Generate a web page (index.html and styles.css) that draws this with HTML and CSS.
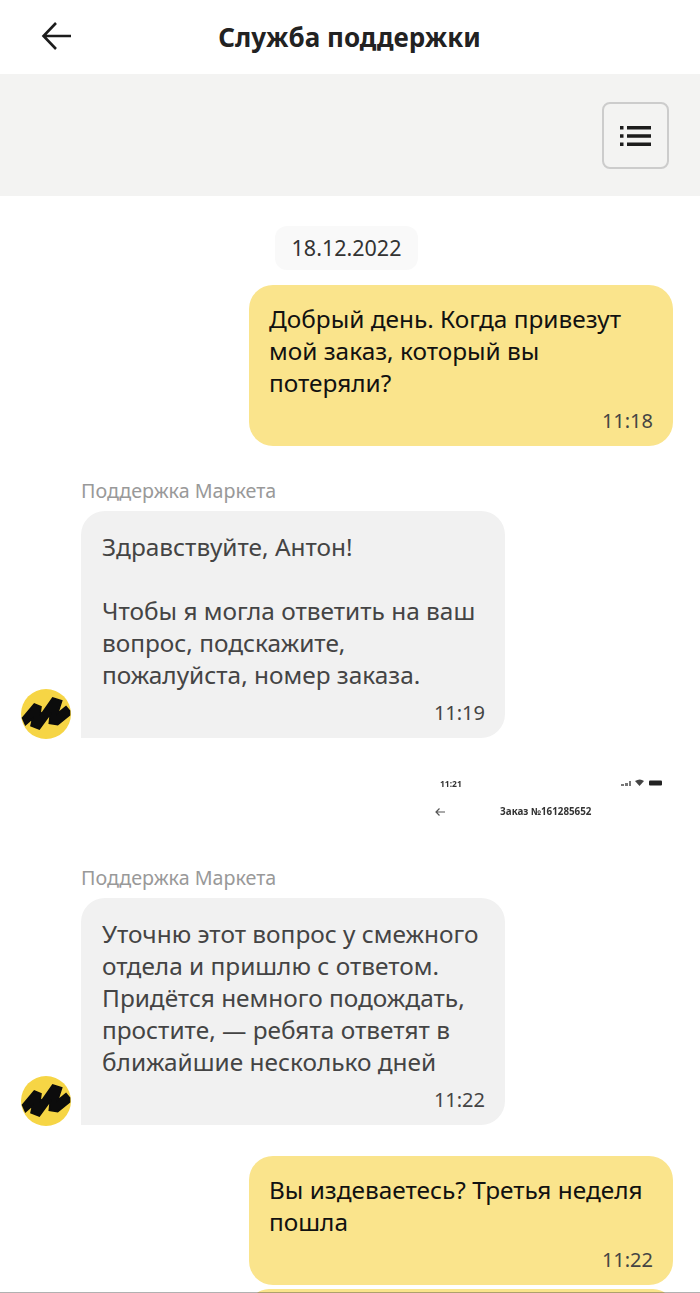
FILE: index.html
```html
<!DOCTYPE html>
<html lang="ru">
<head>
  <meta charset="UTF-8" />
  <meta name="viewport" content="width=device-width, initial-scale=1.0"/>
  <title>Служба поддержки</title>
  <link rel="stylesheet" href="styles.css">
</head>
<body>
  <header class="topbar">
    <svg class="back-icon" width="32" height="30" viewBox="0 0 32 30" aria-hidden="true">
      <path d="M30 15H3M15 2 2.500 15 15 28" fill="none" stroke="#1c1c1c" stroke-width="2.600"/>
    </svg>
    <h1>Служба поддержки</h1>
  </header>

  <div class="band">
    <button class="menu-btn" aria-label="Меню">
      <svg width="31" height="20" viewBox="0 0 31 20" aria-hidden="true">
        <path d="M0 0h3.500v3.500H0zM0 8.300h3.500v3.500H0zM0 16.500h3.500V20H0zM7 0h24v3.500H7zM7 8.300h24v3.500H7zM7 16.500h24V20H7z" fill="#1c1c1c"/>
      </svg>
    </button>
  </div>

  <main class="chat">
    <div class="date">18.12.2022</div>

    <div class="msg-out">
      <p>Добрый день. Когда привезут мой заказ, который вы потеряли?</p>
      <time>11:18</time>
    </div>

    <div class="sender">Поддержка Маркета</div>
    <div class="row-in">
      <svg class="avatar" width="50" height="50" viewBox="0 0 50 50" aria-hidden="true">
        <circle cx="25" cy="25" r="25" fill="#f6d545"/>
        <path d="M1.500 29 13.300 15 20 17.700 19 25 21.700 23.300 31.700 9 40.700 11.700 36.700 24.300 45 17.700 48.500 21.700 48.500 26 36.700 35.700 28.300 34.300 29.300 25 18.300 40 10 36.700 11.700 29.300 4.500 35.700z" fill="#0c0c0c" stroke="#0c0c0c" stroke-width="1.600"/>
      </svg>
      <div class="msg-in">
        <p>Здравствуйте, Антон!<br><br>Чтобы я могла ответить на ваш вопрос, подскажите, пожалуйста, номер заказа.</p>
        <time>11:19</time>
      </div>
    </div>

    <div class="thumb">
      <div class="thumb-status">
        <span>11:21</span>
        <svg width="44" height="8" viewBox="0 0 44 8" aria-hidden="true">
          <path d="M0 5h3v2H0zM4 4h3v3H4zM8 2h2v5H8z" fill="#777"/>
          <path d="M14 2q5-3 9 0l-4.500 5z" fill="#444"/>
          <rect x="28" y="1.500" width="13" height="5" rx="1" fill="#222"/>
        </svg>
      </div>
      <div class="thumb-title">
        <svg width="12" height="10" viewBox="0 0 12 10" aria-hidden="true">
          <path d="M11 5H2M5.500 1.500 2 5l3.500 3.500" fill="none" stroke="#555" stroke-width="1.200"/>
        </svg>
        <span>Заказ №161285652</span>
      </div>
    </div>

    <div class="sender">Поддержка Маркета</div>
    <div class="row-in">
      <svg class="avatar" width="50" height="50" viewBox="0 0 50 50" aria-hidden="true">
        <circle cx="25" cy="25" r="25" fill="#f6d545"/>
        <path d="M1.500 29 13.300 15 20 17.700 19 25 21.700 23.300 31.700 9 40.700 11.700 36.700 24.300 45 17.700 48.500 21.700 48.500 26 36.700 35.700 28.300 34.300 29.300 25 18.300 40 10 36.700 11.700 29.300 4.500 35.700z" fill="#0c0c0c" stroke="#0c0c0c" stroke-width="1.600"/>
      </svg>
      <div class="msg-in">
        <p>Уточню этот вопрос у смежного отдела и пришлю с ответом. Придётся немного подождать, простите, — ребята ответят в ближайшие несколько дней</p>
        <time>11:22</time>
      </div>
    </div>

    <div class="msg-out msg-out-second">
      <p>Вы издеваетесь? Третья неделя пошла</p>
      <time>11:22</time>
    </div>
    <div class="msg-out msg-out-next"></div>
  </main>

  <div class="bottom-line"></div>
</body>
</html>
```

FILE: styles.css
```css
* {
  margin: 0;
  padding: 0;
  box-sizing: border-box;
}

html,
body {
  height: 1293px;
  overflow: hidden;
}

body {
  position: relative;
  background: #fff;
  font-family: "Noto Sans", "Open Sans", sans-serif;
  color: #1c1c1c;
}

.topbar {
  height: 74px;
  display: flex;
  align-items: center;
  justify-content: center;
  position: relative;
  padding-right: 1px;
}

.topbar h1 {
  font-size: 26px;
  font-weight: 700;
  color: #222;
}

.back-icon {
  position: absolute;
  left: 41px;
  top: 21px;
}

.band {
  height: 122px;
  background: #f3f3f2;
  display: flex;
  justify-content: flex-end;
  padding: 28px 31px 0 0;
}

.menu-btn {
  width: 67px;
  height: 67px;
  background: #f3f3f2;
  border: 2px solid #ccc;
  border-radius: 8px;
  display: flex;
  align-items: center;
  justify-content: center;
}

.chat {
  display: flex;
  flex-direction: column;
  padding-top: 30px;
}

.date {
  margin-left: 275px;
  width: 143px;
  height: 44px;
  background: #f9f9f9;
  border-radius: 12px;
  font-size: 21.500px;
  line-height: 44px;
  text-align: center;
  color: #333;
}

.msg-out,
.msg-in {
  width: 424px;
  font-size: 24.400px;
  line-height: 32px;
}

.msg-out {
  align-self: flex-end;
  margin: 15px 27px 0 0;
  padding: 18px 20px 12px;
  background: #fae48c;
  border-radius: 24px;
  color: #111;
}

.msg-out-second {
  margin-top: 31px;
}

.msg-out-next {
  margin-top: 4px;
  height: 40px;
}

.msg-in {
  padding: 20px 20px 12px 21px;
  background: #f1f1f1;
  border-radius: 24px 24px 24px 0;
  color: #444;
}

.msg-out time,
.msg-in time {
  display: block;
  font-size: 20px;
  line-height: 26px;
  text-align: right;
  color: #444;
  margin-top: 9px;
}

.sender {
  margin: 32px 0 0 81px;
  font-size: 19.700px;
  line-height: 26px;
  color: #999;
}

.row-in {
  display: flex;
  align-items: flex-end;
  gap: 10px;
  padding-left: 21px;
  margin-top: 7px;
}

.avatar {
  margin-bottom: -1px;
  flex: none;
}

.thumb {
  height: 73px;
  margin: 22px 0 0 420px;
  width: 253px;
  padding-top: 16px;
  color: #333;
  filter: blur(.5px);
  font-weight: 700;
  font-size: 8.500px;
}

.thumb-status {
  display: flex;
  justify-content: space-between;
  align-items: center;
  padding: 0 8px 0 20px;
  height: 14px;
}

.thumb-title {
  display: flex;
  align-items: center;
  gap: 54px;
  padding: 15px 0 0 14px;
  font-size: 9.800px;
}

.bottom-line {
  position: absolute;
  left: 0;
  right: 0;
  bottom: 0;
  height: 1px;
  background: rgba(60, 60, 60, .4);
}
```
